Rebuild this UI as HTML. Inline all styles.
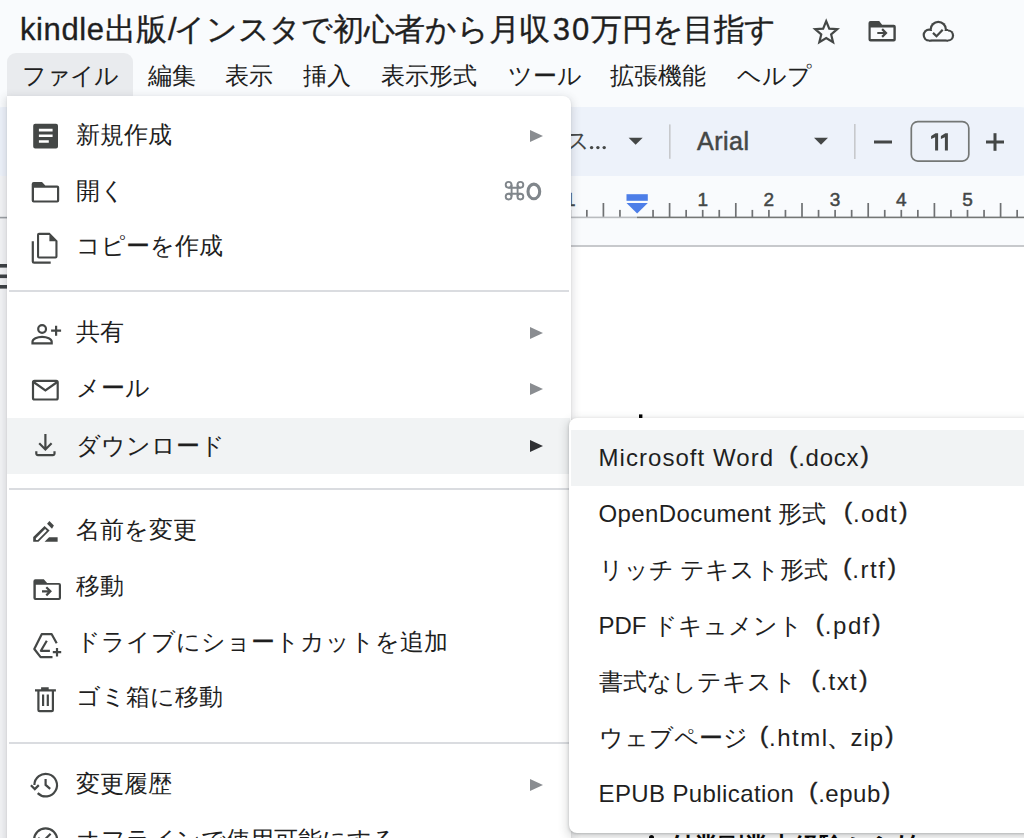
<!DOCTYPE html>
<html lang="ja">
<head>
<meta charset="utf-8">
<style>
*{margin:0;padding:0;box-sizing:border-box}
html,body{width:1024px;height:838px;overflow:hidden;background:#f9fbfd;font-family:"Liberation Sans",sans-serif;color:#1f1f1f}
.a{position:absolute}
#title{left:20px;top:9.5px;font-size:31px;color:#1f1f1f;-webkit-text-stroke:.35px #1f1f1f;white-space:nowrap;line-height:40px}
.mb{top:58px;font-size:24px;line-height:36px;color:#1f1f1f;white-space:nowrap}
#filetab{left:7px;top:53px;width:126px;height:43px;background:#e9ebee;border-radius:9px 9px 0 0}
#toolbar{left:-20px;top:107px;width:1064px;height:69px;background:#edf2fa;border-radius:24px}
#ruler{left:0;top:176px;width:1024px;height:69px;background:#f9fbfd}
#docline{left:300px;top:245px;width:724px;height:2px;background:#c7c9cc}
#doc{left:0;top:247px;width:1024px;height:591px;background:#fff}
#menu{left:7px;top:96px;width:563.5px;height:780px;background:#fff;box-shadow:0 3px 8px 2px rgba(60,64,67,.16),0 1px 2px rgba(60,64,67,.14);border-radius:0 8px 8px 8px}
.mi{position:absolute;left:0;width:563px;height:56px;font-size:24px;line-height:56px;color:#1f1f1f;white-space:nowrap}
.mi .t{position:absolute;left:69px;top:0}
.mi .ar{position:absolute;left:522.5px;top:23px;width:0;height:0;border-left:13px solid #8a8d91;border-top:6px solid transparent;border-bottom:6px solid transparent}
.sep{position:absolute;left:2px;width:559.8px;height:2px;background:#dadce0}
#sub{left:569px;top:418px;width:480px;height:415px;background:#fff;box-shadow:0 4px 8px 3px rgba(60,64,67,.15),0 1px 3px rgba(60,64,67,.3);border-radius:8px}
.si{position:absolute;left:2px;width:478px;height:56px;font-size:24px;line-height:56px;color:#1f1f1f;white-space:nowrap}
.si .t{position:absolute;left:27.5px;top:0}
.l{letter-spacing:.8px}
.po{font-style:normal;display:inline-block;width:24px;text-align:right;padding-right:1px;position:relative;top:-3.5px;-webkit-text-stroke:.45px #1f1f1f}
.pc{font-style:normal;display:inline-block;padding-left:1.5px;position:relative;top:-3.5px;-webkit-text-stroke:.45px #1f1f1f}
svg{position:absolute;left:0;top:0;overflow:visible}
.ic{fill:none;stroke:#444746;stroke-width:2.2}
.f{fill:#444746;stroke:none}
.tb{font-size:25px;color:#444746;white-space:nowrap;line-height:30px}
</style>
</head>
<body>
<div id="toolbar" class="a"></div>
<div id="ruler" class="a"></div>
<div id="docline" class="a"></div>
<div id="doc" class="a"></div>
<div class="a" style="left:0;top:176px;width:8px;height:662px;background:#f3f4f6"></div>
<div class="a" style="left:669px;top:831px;font-size:25px;line-height:30px;font-weight:bold;color:#000;white-space:nowrap">付業副業未経験から始</div>
<div class="a" style="left:649px;top:835px;width:5px;height:5px;border-radius:50%;background:#000"></div>

<!-- toolbar contents -->
<div class="a tb" style="left:540px;top:126px;font-size:24px">キス</div>
<div class="a tb" style="left:697px;top:126px;letter-spacing:.5px;-webkit-text-stroke:.5px #444746">Arial</div>

<svg width="1024" height="838">
  <path class="f" d="M628.6 137.7h14.1l-7.05 7.05z"/>
  <path class="f" d="M814 137.8h14l-7 7z"/>
  <rect x="669" y="124.4" width="1.6" height="34.4" fill="#c7c9cc"/>
  <rect x="854" y="124" width="1.6" height="35" fill="#c7c9cc"/>
  <rect x="874" y="140.5" width="18" height="3" fill="#444746"/>
  <rect x="911.3" y="121.6" width="57.5" height="39.5" rx="6.5" fill="none" stroke="#747775" stroke-width="1.7"/>
  <path class="f" d="M935.5 133.2h2.6v17.2h-3v-13.1l-4 1.6v-2.8zM945.3 133.2h2.6v17.2h-3v-13.1l-4 1.6v-2.8z"/>
  <circle cx="591.6" cy="147.6" r="1.7" fill="#444746"/><circle cx="597.9" cy="147.6" r="1.7" fill="#444746"/><circle cx="604.2" cy="147.6" r="1.7" fill="#444746"/>
  <rect x="986" y="140.5" width="18" height="3" fill="#444746"/>
  <rect x="993.5" y="133.2" width="3" height="17.6" fill="#444746"/>
  <!-- ruler -->
  <g id="ticks"><rect x="569.45" y="209.9" width="1.7" height="7.1" fill="#6f7173"/><rect x="586.00" y="209.9" width="1.7" height="7.1" fill="#6f7173"/><rect x="602.55" y="203" width="1.7" height="14.0" fill="#6f7173"/><rect x="619.10" y="209.9" width="1.7" height="7.1" fill="#6f7173"/><rect x="652.20" y="209.9" width="1.7" height="7.1" fill="#6f7173"/><rect x="668.75" y="203" width="1.7" height="14.0" fill="#6f7173"/><rect x="685.30" y="209.9" width="1.7" height="7.1" fill="#6f7173"/><rect x="701.85" y="209.9" width="1.7" height="7.1" fill="#6f7173"/><rect x="718.40" y="209.9" width="1.7" height="7.1" fill="#6f7173"/><rect x="734.95" y="203" width="1.7" height="14.0" fill="#6f7173"/><rect x="751.50" y="209.9" width="1.7" height="7.1" fill="#6f7173"/><rect x="768.05" y="209.9" width="1.7" height="7.1" fill="#6f7173"/><rect x="784.60" y="209.9" width="1.7" height="7.1" fill="#6f7173"/><rect x="801.15" y="203" width="1.7" height="14.0" fill="#6f7173"/><rect x="817.70" y="209.9" width="1.7" height="7.1" fill="#6f7173"/><rect x="834.25" y="209.9" width="1.7" height="7.1" fill="#6f7173"/><rect x="850.80" y="209.9" width="1.7" height="7.1" fill="#6f7173"/><rect x="867.35" y="203" width="1.7" height="14.0" fill="#6f7173"/><rect x="883.90" y="209.9" width="1.7" height="7.1" fill="#6f7173"/><rect x="900.45" y="209.9" width="1.7" height="7.1" fill="#6f7173"/><rect x="917.00" y="209.9" width="1.7" height="7.1" fill="#6f7173"/><rect x="933.55" y="203" width="1.7" height="14.0" fill="#6f7173"/><rect x="950.10" y="209.9" width="1.7" height="7.1" fill="#6f7173"/><rect x="966.65" y="209.9" width="1.7" height="7.1" fill="#6f7173"/><rect x="983.20" y="209.9" width="1.7" height="7.1" fill="#6f7173"/><rect x="999.75" y="203" width="1.7" height="14.0" fill="#6f7173"/><rect x="1016.30" y="209.9" width="1.7" height="7.1" fill="#6f7173"/><g font-size="19" fill="#444746" stroke="#444746" stroke-width="0.5" font-family="Liberation Sans, sans-serif"><text x="570.3" y="206.3" text-anchor="middle">1</text><text x="702.7" y="206.3" text-anchor="middle">1</text><text x="768.9" y="206.3" text-anchor="middle">2</text><text x="835.1" y="206.3" text-anchor="middle">3</text><text x="901.3" y="206.3" text-anchor="middle">4</text><text x="967.5" y="206.3" text-anchor="middle">5</text></g></g>
  <rect x="570" y="216.6" width="67" height="1.6" fill="#b9bcbf"/>
  <rect x="637" y="216.6" width="387" height="1.6" fill="#747775"/>
  <rect x="626.5" y="194.2" width="21.3" height="6.6" fill="#4d7ee8"/>
  <path d="M626.5 203h21.3l-10.65 10.5z" fill="#4d7ee8"/>
  <!-- title icons -->
  <path class="ic" d="M826.2 21.2l3.05 7.4 8 .6-6.1 5.2 1.9 7.8-6.85-4.2-6.85 4.2 1.9-7.8-6.1-5.2 8-.6z" stroke-linejoin="miter"/>
  <path class="f" d="M868.5 23a2 2 0 0 1 2-2h8.7l2.9 3.7h11.7a2 2 0 0 1 2 2v12.8a2 2 0 0 1-2 2h-23.3a2 2 0 0 1-2-2zM870.7 27.6v11.3h22.7v-11.3z"/>
  <path class="ic" d="M877.3 33h8M882.1 29.1l3.9 3.9-3.9 3.9" stroke-width="2.4"/>
  <g fill="#444746"><circle cx="929.1" cy="35.1" r="6.5"/><circle cx="938.3" cy="29.5" r="8.7"/><circle cx="948" cy="35.5" r="6.1"/><rect x="929" y="29" width="19" height="12.6"/></g>
  <g fill="#f9fbfd"><circle cx="929.1" cy="35.1" r="4.3"/><circle cx="938.3" cy="29.5" r="6.5"/><circle cx="948" cy="35.5" r="3.9"/><rect x="929" y="31" width="19" height="8.4"/></g>
  <path class="ic" d="M933 32.9l3.5 3.4l6.2-6.6" stroke-width="2.4"/>
</svg>
<div id="ruler-nums">
  <div class="a" style="left:571px;top:190px;font-size:18px;color:#444746;line-height:20px"> </div>
</div>

<div id="title" class="a"><span style="letter-spacing:.6px">kindle</span>出版<span style="margin:0 -2.6px 0 1.5px">/</span><span style="letter-spacing:-.25px">インスタで初心者から月収</span><span style="margin-left:2.5px;letter-spacing:2px">30</span><span style="letter-spacing:-.6px">万円を目指す</span></div>
<div id="filetab" class="a"></div>
<div class="a mb" style="left:22px;letter-spacing:-1.1px">ファイル</div>
<div class="a mb" style="left:148px">編集</div>
<div class="a mb" style="left:225px">表示</div>
<div class="a mb" style="left:303px">挿入</div>
<div class="a mb" style="left:381px">表示形式</div>
<div class="a mb" style="left:508px">ツール</div>
<div class="a mb" style="left:610px">拡張機能</div>
<div class="a mb" style="left:737px">ヘルプ</div>

<!-- left strip -->
<svg width="1024" height="838">
  <rect x="0" y="264" width="7" height="3.6" fill="#3c4043"/>
  <rect x="0" y="274.5" width="7" height="3.6" fill="#3c4043"/>
  <rect x="0" y="285" width="7" height="3.6" fill="#3c4043"/>
  <rect x="0" y="216.8" width="8" height="1.6" fill="#9a9ea3"/>
  <rect x="639" y="414.4" width="3.4" height="3.6" fill="#000"/>
</svg>

<div id="menu" class="a">
  <div class="mi" style="top:11px"><span class="t">新規作成</span><span class="ar"></span></div>
  <div class="mi" style="top:67px"><span class="t">開く</span></div>
  <div class="mi" style="top:122px"><span class="t">コピーを作成</span></div>
  <div class="sep" style="top:194px"></div>
  <div class="mi" style="top:208px"><span class="t">共有</span><span class="ar"></span></div>
  <div class="mi" style="top:264px"><span class="t">メール</span><span class="ar"></span></div>
  <div class="mi" style="top:322px;background:#f1f3f4;height:56px"><span class="t">ダウンロード</span><span class="ar" style="border-left-color:#303134;top:21.5px"></span></div>
  <div class="sep" style="top:392px"></div>
  <div class="mi" style="top:406px"><span class="t">名前を変更</span></div>
  <div class="mi" style="top:462px"><span class="t">移動</span></div>
  <div class="mi" style="top:518px"><span class="t">ドライブにショートカットを追加</span></div>
  <div class="mi" style="top:573px"><span class="t">ゴミ箱に移動</span></div>
  <div class="sep" style="top:646px"></div>
  <div class="mi" style="top:660px"><span class="t">変更履歴</span><span class="ar"></span></div>
  <div class="mi" style="top:716px"><span class="t">オフラインで使用可能にする</span></div>
</div>

<!-- menu icons (page coords) -->
<svg width="1024" height="838">
  <!-- article -->
  <path class="f" d="M35.2 123.7h20.8a2 2 0 0 1 2 2v20.8a2 2 0 0 1-2 2h-20.8a2 2 0 0 1-2-2v-20.8a2 2 0 0 1 2-2zM38.9 128.8v2.6h13.7v-2.6zM38.9 134.5v2.6h13.7v-2.6zM38.9 140.2v2.6h9.9v-2.6z"/>
  <!-- folder -->
  <path class="f" d="M31.7 184a2 2 0 0 1 2-2h8.3l3.3 3.4h11.9a2 2 0 0 1 2 2v13.2a2 2 0 0 1-2 2h-23.5a2 2 0 0 1-2-2zM34 187.7v12.7h23v-12.7z"/>
  <!-- copy -->
  <path class="f" d="M39 232.8h10.6l7.9 7.9v15.8a2 2 0 0 1-2 2h-16.5a2 2 0 0 1-2-2v-21.7a2 2 0 0 1 2-2zM39.1 234.9v21.5h16.3v-15.2h-6v-6.3z"/>
  <path class="ic" d="M32.8 241.2v20.2a1.3 1.3 0 0 0 1.3 1.3h16.6"/>
  <!-- share -->
  <circle class="ic" cx="42.1" cy="329" r="3.9" stroke-width="1.9"/>
  <path class="ic" d="M32.5 343.4v-1.6c0-2.8 4.6-4.9 9.6-4.9s9.6 2.1 9.6 4.9v1.6z" stroke-width="1.9"/>
  <path class="ic" d="M51.1 330.7h10M56.1 325.7v10" stroke-width="1.9"/>
  <!-- mail -->
  <rect class="ic" x="33" y="380.9" width="24.7" height="18.6" rx="1.5" stroke-width="2.1"/>
  <path class="ic" d="M33.5 382l11.9 8.3 11.9-8.3" stroke-width="2.1"/>
  <!-- download -->
  <path class="ic" d="M45.4 433.9v15M39.2 443.3l6.2 6.2 6.2-6.2" stroke-width="2.6"/>
  <path class="ic" d="M36.3 451.3v2.3a1.6 1.6 0 0 0 1.6 1.6h15a1.6 1.6 0 0 0 1.6-1.6v-2.3" stroke-width="2.4"/>
  <!-- rename -->
  <path class="f" d="M33.2 541.8v-4.7l11.35-11.1l5.05 4.6l-11.1 11.2zM35.9 538.2v1.7h1.8l9.2-9.2-1.8-1.8z"/>
  <path class="f" d="M49.4 521.1l4.5 4.5-1.9 3.1-4.9-4.9z"/>
  <path class="f" d="M44.55 541.8l4.5-4.5h8.55v4.5z"/>
  <!-- move -->
  <path class="f" d="M33.4 581.2a2 2 0 0 1 2-2h8.4l3.3 3.7h11.9a2 2 0 0 1 2 2v13.2a2 2 0 0 1-2 2h-23.6a2 2 0 0 1-2-2zM35.8 584.8v13.2h23v-13.2z"/>
  <path class="ic" d="M42 591.3h8.5M46.3 587.2l4.1 4.1-4.1 4.1" stroke-width="2.5"/>
  <!-- drive shortcut -->
  <path class="ic" d="M52.5 657.2h-11.9l-6.3-8.2 7.4-14.8h10l5 9" stroke-width="2.1" stroke-linejoin="round"/>
  <path class="ic" d="M49.9 650.8h-9l5.9-10" stroke-width="2.1" stroke-linejoin="round"/>
  <path class="ic" d="M52.8 652.2h8.4M57 648v8.4" stroke-width="2"/>
  <!-- trash -->
  <path class="ic" d="M35 690.4h20.9M41.1 688.4h7.6" stroke-width="2.3"/>
  <path class="ic" d="M38.4 690.6v19.3a1.2 1.2 0 0 0 1.2 1.2h12.1a1.2 1.2 0 0 0 1.2-1.2v-19.3" stroke-width="2.3"/>
  <path class="ic" d="M43.1 694.6v11.4M47.8 694.6v11.4" stroke-width="1.6"/>
  <!-- history -->
  <path class="ic" d="M34.4 785.1a11.3 11.3 0 1 1 3.3 8" stroke-width="2.2"/>
  <path class="ic" d="M30.9 785.2l3.9 3.9 4-4" stroke-width="2.6"/>
  <path class="ic" d="M45.6 779.1v5.8l4.6 4" stroke-width="2.2"/>
  <!-- offline -->
  <circle class="ic" cx="45.6" cy="840" r="11.6" stroke-width="2.4"/>
  <path class="ic" d="M38.2 837.8l4.2 4.2l8.2-8.2" stroke-width="2.4"/>
  <!-- cmd O -->
  <g fill="none" stroke="#80868b" stroke-width="1.9">
    <path d="M508.6 187.8h11.8M508.6 193.8h11.8M511.6 184.8v11.8M517.6 184.8v11.8"/>
    <circle cx="508.6" cy="184.8" r="2.9"/><circle cx="520.4" cy="184.8" r="2.9"/>
    <circle cx="508.6" cy="196.6" r="2.9"/><circle cx="520.4" cy="196.6" r="2.9"/>
  </g>
  <ellipse cx="533.85" cy="191.45" rx="5.85" ry="7.35" fill="none" stroke="#80868b" stroke-width="3.1"/>
</svg>

<div id="sub" class="a">
  <div class="si" style="top:12px;background:#f1f3f4"><span class="t"><span style="letter-spacing:1.05px">Microsoft Word</span><i class="po">(</i><span style="letter-spacing:.75px">.docx</span><i class="pc">)</i></span></div>
  <div class="si" style="top:68px"><span class="t"><span style="letter-spacing:.4px">OpenDocument</span> 形式<i class="po" style="margin-left:3px">(</i><span style="letter-spacing:1.2px">.odt</span><i class="pc">)</i></span></div>
  <div class="si" style="top:124px"><span class="t">リッチ テキスト形式<i class="po">(</i><span style="letter-spacing:1.6px">.rtf</span><i class="pc">)</i></span></div>
  <div class="si" style="top:180px"><span class="t">PDF ドキュメント<i class="po" style="margin-left:-2.5px">(</i><span style="letter-spacing:1.6px">.pdf</span><i class="pc">)</i></span></div>
  <div class="si" style="top:236px"><span class="t">書式なしテキスト<i class="po">(</i><span style="letter-spacing:1.4px">.txt</span><i class="pc">)</i></span></div>
  <div class="si" style="top:292px"><span class="t">ウェブページ<i class="po" style="margin-left:-2.5px">(</i><span style="letter-spacing:1.5px">.html</span><span style="margin-left:-2px;-webkit-text-stroke:.4px #1f1f1f">、</span><span style="letter-spacing:.95px">zip</span><i class="pc">)</i></span></div>
  <div class="si" style="top:348px"><span class="t"><span style="letter-spacing:.39px">EPUB Publication</span><i class="po">(</i><span style="letter-spacing:.5px">.epub</span><i class="pc">)</i></span></div>
</div>
</body>
</html>
